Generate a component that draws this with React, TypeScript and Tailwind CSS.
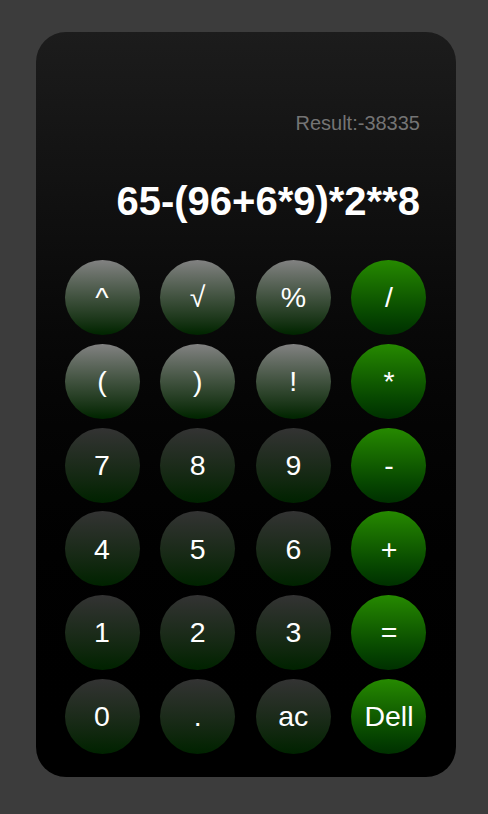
import React from 'react';

type Key = { label: string; kind: 'top' | 'num' | 'op' };

const keys: Key[] = [
  { label: '^', kind: 'top' },
  { label: '√', kind: 'top' },
  { label: '%', kind: 'top' },
  { label: '/', kind: 'op' },
  { label: '(', kind: 'top' },
  { label: ')', kind: 'top' },
  { label: '!', kind: 'top' },
  { label: '*', kind: 'op' },
  { label: '7', kind: 'num' },
  { label: '8', kind: 'num' },
  { label: '9', kind: 'num' },
  { label: '-', kind: 'op' },
  { label: '4', kind: 'num' },
  { label: '5', kind: 'num' },
  { label: '6', kind: 'num' },
  { label: '+', kind: 'op' },
  { label: '1', kind: 'num' },
  { label: '2', kind: 'num' },
  { label: '3', kind: 'num' },
  { label: '=', kind: 'op' },
  { label: '0', kind: 'num' },
  { label: '.', kind: 'num' },
  { label: 'ac', kind: 'num' },
  { label: 'Dell', kind: 'op' },
];

const kindClass = {
  top: 'bg-gradient-to-b from-[#828282] to-[#002400]',
  num: 'bg-gradient-to-b from-[#333333] to-[#002200]',
  op: 'bg-gradient-to-b from-[#268a00] to-[#003000]',
};

const App: React.FC = () => {
  return (
    <div className="min-h-[814px] bg-[#3c3c3c] pt-[32px] pl-[36px] font-['Liberation_Sans',Arial,sans-serif]">
      <div className="w-[420px] h-[745px] rounded-[30px] bg-gradient-to-b from-[#1c1c1c] to-[#000000] pt-[79px] pr-[36px]">
        <div className="text-right text-[20px] leading-[24px] text-[#747474]">Result:-38335</div>
        <div className="mt-[42px] text-right text-[40px] leading-[48px] font-bold text-white">65-(96+6*9)*2**8</div>
        <div className="mt-[35px] ml-[28.5px] w-[362px] grid grid-cols-[75px_75px_75px_75px] justify-between gap-y-[8.8px]">
          {keys.map((k) => (
            <button
              key={k.label}
              className={`w-[75px] h-[75px] rounded-full flex items-center justify-center text-white text-[28.5px] leading-none ${kindClass[k.kind]}`}
            >
              {k.label}
            </button>
          ))}
        </div>
      </div>
    </div>
  );
};

export default App;
